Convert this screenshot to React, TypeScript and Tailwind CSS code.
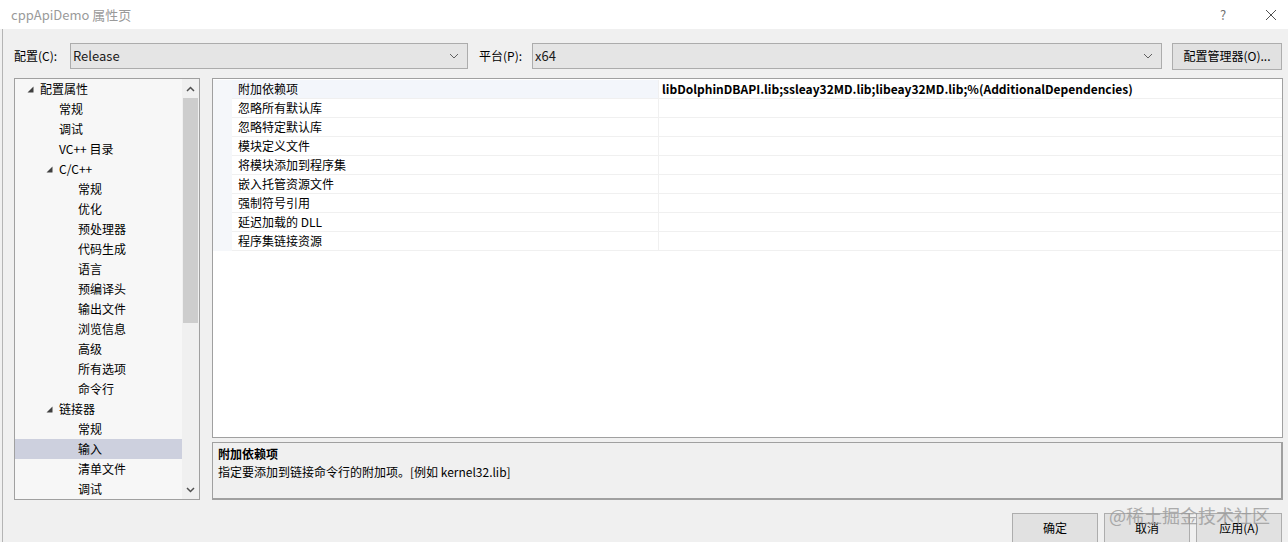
import React from "react";

const font = { fontFamily: '"Microsoft YaHei UI","Noto Sans CJK SC","Noto Sans",sans-serif' };

type TreeItem = { label: string; level: number; expanded?: boolean; selected?: boolean };

const tree: TreeItem[] = [
  { label: "配置属性", level: 0, expanded: true },
  { label: "常规", level: 1 },
  { label: "调试", level: 1 },
  { label: "VC++ 目录", level: 1 },
  { label: "C/C++", level: 1, expanded: true },
  { label: "常规", level: 2 },
  { label: "优化", level: 2 },
  { label: "预处理器", level: 2 },
  { label: "代码生成", level: 2 },
  { label: "语言", level: 2 },
  { label: "预编译头", level: 2 },
  { label: "输出文件", level: 2 },
  { label: "浏览信息", level: 2 },
  { label: "高级", level: 2 },
  { label: "所有选项", level: 2 },
  { label: "命令行", level: 2 },
  { label: "链接器", level: 1, expanded: true },
  { label: "常规", level: 2 },
  { label: "输入", level: 2, selected: true },
  { label: "清单文件", level: 2 },
  { label: "调试", level: 2 },
];

const props = [
  "附加依赖项",
  "忽略所有默认库",
  "忽略特定默认库",
  "模块定义文件",
  "将模块添加到程序集",
  "嵌入托管资源文件",
  "强制符号引用",
  "延迟加载的 DLL",
  "程序集链接资源",
];

function Chevron() {
  return (
    <svg width="10" height="6" viewBox="0 0 10 6" className="shrink-0">
      <path d="M1 1 L5 5 L9 1" fill="none" stroke="#606060" strokeWidth="1" />
    </svg>
  );
}

function Tri() {
  return (
    <svg width="7" height="7" viewBox="0 0 7 7" className="shrink-0">
      <path d="M6.5 0.5 L6.5 6.5 L0.5 6.5 Z" fill="#404040" />
    </svg>
  );
}

function Combo({ value, className }: { value: string; className: string }) {
  return (
    <div className={`flex items-center h-[26px] bg-[#e5e5e5] border border-[#acacac] pl-[2px] pr-[8px] ${className}`}>
      <span className="flex-1 text-[13px] text-[#1a1a1a]">{value}</span>
      <Chevron />
    </div>
  );
}

function Button({ label }: { label: string }) {
  return (
    <div className="w-[86px] h-[30px] bg-[#e1e1e1] border border-[#adadad] flex items-center justify-center text-[12px] text-black">
      {label}
    </div>
  );
}

export default function App() {
  return (
    <div className="w-[1288px] h-[542px] overflow-hidden bg-[#f0f0f0] flex flex-col relative" style={font}>
      {/* title bar */}
      <div className="h-[29px] bg-white flex items-center shrink-0">
        <span className="pl-[11px] text-[13px] text-[#9a9a9a] flex-1">cppApiDemo 属性页</span>
        <span className="text-[13px] text-[#707070] w-[12px] mr-[33px]">?</span>
        <svg width="12" height="12" viewBox="0 0 12 12" className="mr-[11px]">
          <path d="M1 1 L11 11 M11 1 L1 11" stroke="#505050" strokeWidth="1" />
        </svg>
      </div>

      <div className="flex-1 flex flex-col ml-[2px] border-l border-[#b4b4b4] pl-[11px] pr-[5px]">
        {/* config row */}
        <div className="flex items-center mt-[14px] h-[26px]">
          <span className="text-[12px] text-black w-[56px]">配置(C):</span>
          <Combo value="Release" className="w-[398px]" />
          <span className="text-[12px] text-black ml-[11px] w-[53px]">平台(P):</span>
          <Combo value="x64" className="w-[630px]" />
          <div className="ml-[10px] w-[110px] h-[27px] bg-[#e1e1e1] border border-[#adadad] flex items-center justify-center text-[12px] text-black">
            配置管理器(O)...
          </div>
        </div>

        {/* panels */}
        <div className="flex mt-[9px] h-[422px]">
          {/* tree */}
          <div className="w-[186px] h-full border border-[#a0a0a0] bg-[#f7f7f7] flex">
            <div className="flex-1 flex flex-col pt-0">
              {tree.map((t, i) => (
                <div
                  key={i}
                  className={`h-[20px] flex items-center text-[12px] text-black ${t.selected ? "bg-[#cdd0de]" : ""}`}
                >
                  <div
                    className="flex items-center justify-end shrink-0 pr-[6px]"
                    style={{ width: 25 + t.level * 19 }}
                  >
                    {t.expanded ? <Tri /> : null}
                  </div>
                  <span>{t.label}</span>
                </div>
              ))}
            </div>
            {/* scrollbar */}
            <div className="w-[17px] h-full bg-[#f0f0f0] flex flex-col">
              <div className="h-[19px] flex items-center justify-center">
                <svg width="9" height="6" viewBox="0 0 9 6">
                  <path d="M1 5 L4.5 1.5 L8 5" fill="none" stroke="#505050" strokeWidth="1.5" />
                </svg>
              </div>
              <div className="mx-[1px] h-[225px] bg-[#cdcdcd]" />
              <div className="flex-1" />
              <div className="h-[19px] flex items-center justify-center">
                <svg width="9" height="6" viewBox="0 0 9 6">
                  <path d="M1 1 L4.5 4.5 L8 1" fill="none" stroke="#505050" strokeWidth="1.5" />
                </svg>
              </div>
            </div>
          </div>

          {/* right side */}
          <div className="ml-[12px] flex-1 flex flex-col">
            <div className="h-[360px] border border-[#a0a0a0] bg-white flex flex-col pt-[1px]">
              {props.map((p, i) => (
                <div key={i} className="h-[19px] flex text-[12px] text-black">
                  <div className="w-[19px] bg-[#f5f7fa]" />
                  <div
                    className={`w-[427px] flex items-center pl-[6px] border-b border-r border-[#f0f0f0] ${i === 0 ? "bg-[#f3f6fb]" : ""}`}
                  >
                    {p}
                  </div>
                  <div className="flex-1 flex items-center pl-[3px] border-b border-[#f0f0f0] font-bold">
                    {i === 0 ? "libDolphinDBAPI.lib;ssleay32MD.lib;libeay32MD.lib;%(AdditionalDependencies)" : ""}
                  </div>
                </div>
              ))}
            </div>
            <div className="mt-[4px] h-[58px] border border-[#a0a0a0] border-b-2 border-r-2 bg-[#f0f0f0] px-[5px] pt-[2px] text-[12px] text-black leading-[18px]">
              <div className="font-bold">附加依赖项</div>
              <div>指定要添加到链接命令行的附加项。[例如 kernel32.lib]</div>
            </div>
          </div>
        </div>

        {/* buttons */}
        <div className="flex justify-end mt-[13px] gap-[6px] pr-[1px]">
          <Button label="确定" />
          <Button label="取消" />
          <Button label="应用(A)" />
        </div>
      </div>

      {/* watermark */}
      <div className="absolute left-[1109px] top-[502px] text-[18px] text-[#9a9a9a] opacity-80 pointer-events-none">
        @稀土掘金技术社区
      </div>
    </div>
  );
}
